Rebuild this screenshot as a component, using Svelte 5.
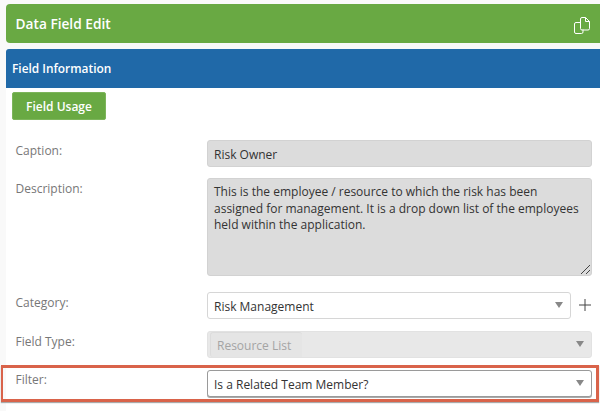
<script>
  let caption = 'Risk Owner';
  let description = 'This is the employee / resource to which the risk has been assigned for management. It is a drop down list of the employees held within the application.';
</script>

<div class="page">
  <header class="title">
    <h1>Data Field Edit</h1>
    <svg class="copy" width="16" height="17" viewBox="0 0 16 17" fill="none" stroke="#fff" stroke-width="1">
      <path d="M6.500 5.500H2a1.500 1.500 0 0 0-1.500 1.500v8a1.500 1.500 0 0 0 1.500 1.500h5.500a1.500 1.500 0 0 0 1.500-1.500v-2.500" />
      <path d="M6.500 2a1.500 1.500 0 0 1 1.500-1.500h3.500l4 4v7a1.500 1.500 0 0 1-1.500 1.500h-6a1.500 1.500 0 0 1-1.500-1.500z" />
      <path d="M11.500 .5v4h4" />
    </svg>
  </header>

  <section class="panel">
    <h2>Field Information</h2>
    <button class="usage">Field Usage</button>

    <div class="row first">
      <span class="label">Caption:</span>
      <div class="field readonly">{caption}</div>
    </div>
    <div class="row desc">
      <span class="label">Description:</span>
      <div class="field readonly area">
        {description}
        <svg class="grip" width="11" height="11" viewBox="0 0 11 11" stroke="#444" stroke-width="1">
          <path d="M1 10 10 1M6 10l4-4" />
        </svg>
      </div>
    </div>
    <div class="row cat">
      <span class="label">Category:</span>
      <div class="field select short">
        Risk Management
        <span class="arrow"></span>
      </div>
      <svg class="plus" width="14" height="14" viewBox="0 0 14 14" stroke="#444" stroke-width="1">
        <path d="M7 1v12M1 7h12" />
      </svg>
    </div>
    <div class="row type">
      <span class="label">Field Type:</span>
      <div class="field select disabled">
        <span class="inner">Resource List</span>
        <span class="arrow"></span>
      </div>
    </div>
    <div class="row filter">
      <span class="label">Filter:</span>
      <div class="field select active">
        Is a Related Team Member?
        <span class="arrow"></span>
      </div>
    </div>
  </section>
</div>

<style>
  :global(body) {
    margin: 0;
    background: #fff;
  }
  .page {
    width: 600px;
    height: 411px;
    overflow: hidden;
    box-sizing: border-box;
    padding-top: 4px;
    background: #f9f9f9;
    font-family: "Open Sans", "Noto Sans", sans-serif;
    font-size: 12px;
    color: #333;
  }
  .title {
    margin-left: 6px;
    height: 39px;
    background: #69a943;
    border-radius: 4px 0 0 4px;
    display: flex;
    align-items: center;
    justify-content: space-between;
    padding: 0 10px 0 9.500px;
    box-sizing: border-box;
  }
  h1 {
    margin: 0;
    font-size: 13.700px;
    font-weight: 600;
    color: #fff;
  }
  .copy {
    margin-top: 3px;
  }
  .panel {
    margin: 6px 0 0 6px;
    background: #fff;
    height: 362px;
  }
  h2 {
    margin: 0;
    height: 39px;
    line-height: 39px;
    padding-left: 6px;
    background: #2069a8;
    border-radius: 3px 0 0 0;
    color: #fff;
    font-size: 11.900px;
    font-weight: 600;
  }
  .usage {
    display: block;
    margin: 4px 0 0 6px;
    width: 94px;
    height: 28px;
    padding: 0;
    background: #69a943;
    border: 1px solid #7db55b;
    border-radius: 2px;
    color: #fff;
    font: 600 12px "Open Sans", "Noto Sans", sans-serif;
  }
  .row {
    display: flex;
    align-items: flex-start;
    margin-right: 8px;
  }
  .first {
    margin-top: 20px;
  }
  .desc {
    margin-top: 11px;
  }
  .cat {
    margin-top: 16px;
  }
  .type,
  .filter {
    margin-top: 12px;
  }
  .label {
    width: 201px;
    padding: 2px 0 0 9.500px;
    box-sizing: border-box;
    line-height: 18px;
    color: #777;
    flex: none;
  }
  .filter .label {
    padding-top: 1px;
  }
  .field {
    position: relative;
    flex: 1;
    height: 27px;
    box-sizing: border-box;
    padding: 0 6px;
    line-height: 27px;
    border: 1px solid #d6d6d6;
    border-radius: 3px;
    color: #333;
  }
  .readonly {
    background: #dcdcdc;
    border-color: #d2d2d2;
  }
  .area {
    height: 98px;
    line-height: 16.500px;
    padding-top: 5px;
  }
  .grip {
    position: absolute;
    right: 0;
    bottom: 0;
  }
  .select {
    background: #fff;
  }
  .short {
    flex: none;
    width: 364px;
  }
  .disabled {
    background: #e8e8e8;
    border-color: #e2e2e2;
    padding: 0 0 0 2px;
  }
  .inner {
    display: block;
    width: 92px;
    height: 25px;
    box-sizing: border-box;
    padding-left: 6px;
    line-height: 25px;
    background: #e5e5e5;
    border-top: 1px solid #dcdcdc;
    border-left: 1px solid #dcdcdc;
    border-radius: 3px 3px 0 3px;
    color: #a4a4a4;
  }
  .active {
    border-color: #9a9a9a;
    box-shadow: 0 1px 0 #aaa;
  }
  .arrow {
    position: absolute;
    right: 7px;
    top: 9px;
    border-style: solid;
    border-width: 6px 4px 0;
    border-color: #888 transparent transparent;
  }
  .plus {
    margin: 6px 0 0 7px;
    flex: none;
  }
  .filter {
    position: relative;
  }
  /* callout box drawn on top of the screenshot */
  .filter::before {
    content: '';
    position: absolute;
    left: -5px;
    right: -7px;
    top: -5px;
    bottom: -5px;
    border: 3px solid #d9634a;
    border-left-width: 2px;
    box-shadow: 0 1px 1px #aaa;
    pointer-events: none;
  }
</style>
